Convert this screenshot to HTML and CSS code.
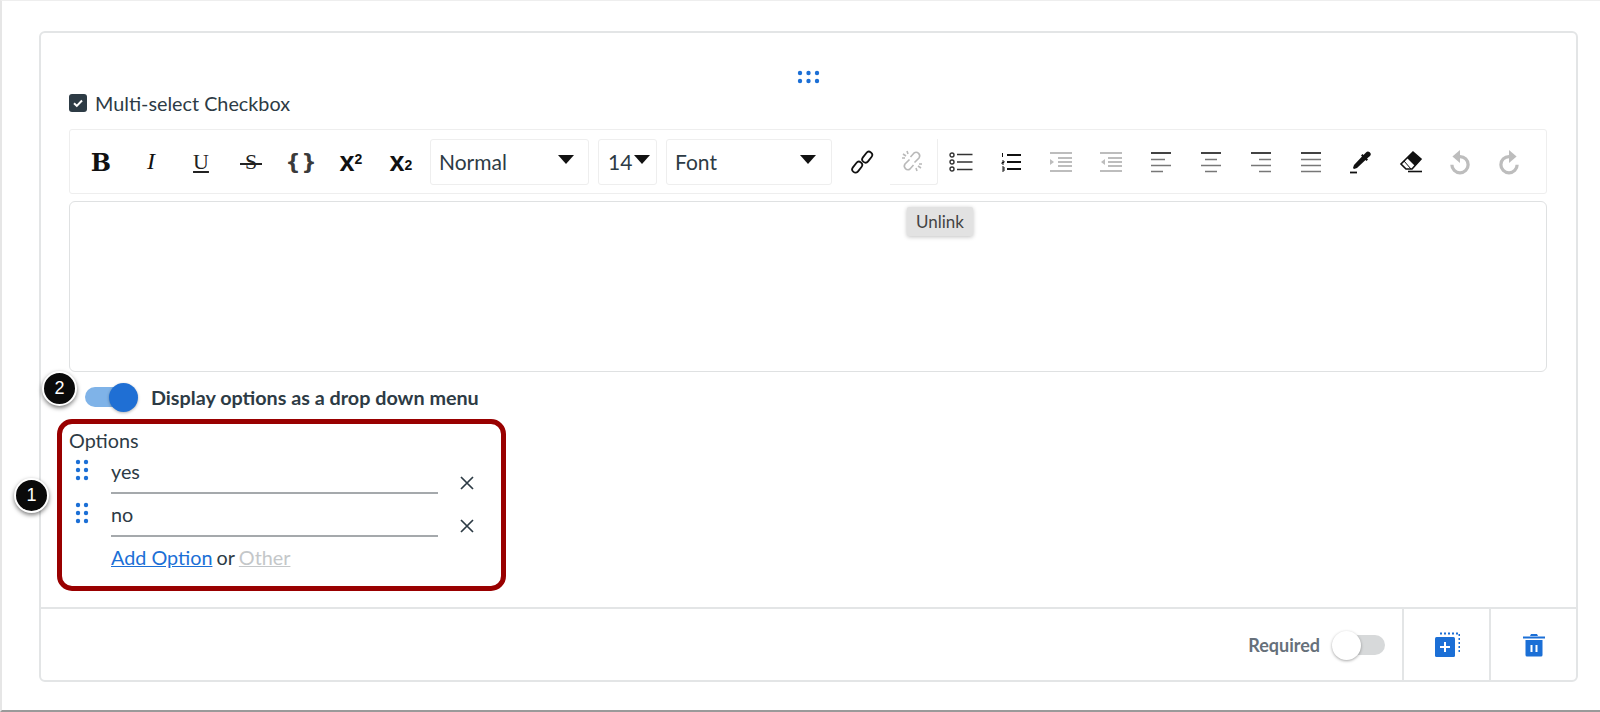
FILE: index.html
```html
<!DOCTYPE html>
<html lang="en">
<head>
<meta charset="utf-8">
<title>Multi-select Checkbox</title>
<link rel="stylesheet" href="styles.css">
</head>
<body>
<div class="screen">
  <section class="card">
    <div class="card-main">
      <svg class="handle-top" width="24" height="14" viewBox="0 0 24 14"><g fill="#1b6fd6"><circle cx="3" cy="3" r="2.2"/><circle cx="11.5" cy="3" r="2.2"/><circle cx="20" cy="3" r="2.2"/><circle cx="3" cy="11" r="2.2"/><circle cx="11.5" cy="11" r="2.2"/><circle cx="20" cy="11" r="2.2"/></g></svg>
      <div class="type-row">
        <svg class="check" width="18" height="18" viewBox="0 0 18 18"><rect width="18" height="18" rx="3" fill="#2d3b45"/><path d="M5 9.2l2.8 2.7L13 6.5" fill="none" stroke="#fff" stroke-width="2"/></svg>
        <span>Multi-select Checkbox</span>
      </div>
      <div class="toolbar">
        <span class="tb t-b">B</span>
        <span class="tb t-i">I</span>
        <span class="tb t-u">U</span>
        <span class="tb t-s"><span class="strike">S</span></span>
        <span class="tb t-c">{}</span>
        <span class="tb t-x">x<sup>2</sup></span>
        <span class="tb t-x">x<sub>2</sub></span>
        <div class="select sel-normal"><span>Normal</span><i class="caret"></i></div>
        <div class="select sel-size"><span>14</span><i class="caret"></i></div>
        <div class="select sel-font"><span>Font</span><i class="caret"></i></div>
        <span class="tb tb-link">
          <svg width="24" height="24" viewBox="0 0 24 24" fill="none" stroke="#111" stroke-width="1.8"><rect x="1" y="14" width="12" height="6.500" rx="3.200" transform="rotate(-52 7 17)"/><rect x="11" y="4" width="12" height="6.500" rx="3.200" transform="rotate(-52 17 7)"/></svg>
        </span>
        <span class="tb tb-unlink">
          <svg width="24" height="24" viewBox="0 0 24 24" fill="none" stroke="#b9b9b9" stroke-width="1.6"><path d="M9.500 10.500L5 15a3.600 3.600 0 0 0 5 5l3.500-4"/><path d="M14.500 13.500L19 9a3.600 3.600 0 0 0-5-5l-3.500 4"/><path d="M3 5l3 2M7 2l1 3M21 19l-3-2M17 22l-1-3M2 9h3M22 15h-3"/></svg>
        </span>
        <span class="tb">
          <svg width="24" height="20" viewBox="0 0 24 20" fill="none" stroke="#333"><circle cx="3" cy="3" r="2" stroke-width="1.4"/><circle cx="3" cy="10" r="2" stroke-width="1.4"/><circle cx="3" cy="17" r="2" stroke-width="1.4"/><path d="M8 2.500h15.500M8 10h15.500M8 17.500h15.500" stroke-width="1.500"/></svg>
        </span>
        <span class="tb">
          <svg width="20" height="20" viewBox="0 0 20 20" fill="none" stroke="#111" stroke-width="2"><path d="M6 3h14M6 10h14M6 17h14"/><path d="M1.500 1v4M1 9h2v1.500H1V12h2M1 15h2v4H1M1 17h2" stroke-width="1"/></svg>
        </span>
        <span class="tb">
          <svg width="24" height="22" viewBox="0 0 24 22" fill="none" stroke="#bdbdbd" stroke-width="1.800"><path d="M1 2h22M9 7h14M9 11h14M9 15h14M1 20h22"/><path d="M1 8l4 3-4 3z" fill="#bdbdbd" stroke="none"/></svg>
        </span>
        <span class="tb">
          <svg width="24" height="22" viewBox="0 0 24 22" fill="none" stroke="#bdbdbd" stroke-width="1.800"><path d="M1 2h22M9 7h14M9 11h14M9 15h14M1 20h22"/><path d="M6 8l-4 3 4 3z" fill="#bdbdbd" stroke="none"/></svg>
        </span>
        <span class="tb">
          <svg width="22" height="22" viewBox="0 0 22 22" fill="none" stroke-width="1.700"><path d="M1 2h20" stroke="#222"/><path d="M1 8.500h14M1 14.500h20M1 20.500h12" stroke="#777"/></svg>
        </span>
        <span class="tb">
          <svg width="22" height="22" viewBox="0 0 22 22" fill="none" stroke-width="1.700"><path d="M1 2h20" stroke="#222"/><path d="M5 8.500h12M1 14.500h20M5 20.500h12" stroke="#777"/></svg>
        </span>
        <span class="tb">
          <svg width="22" height="22" viewBox="0 0 22 22" fill="none" stroke-width="1.700"><path d="M1 2h20" stroke="#222"/><path d="M9 8.500h12M1 14.500h20M9 20.500h12" stroke="#777"/></svg>
        </span>
        <span class="tb">
          <svg width="22" height="22" viewBox="0 0 22 22" fill="none" stroke-width="1.700"><path d="M1 2h20" stroke="#222"/><path d="M1 8.500h20M1 14.500h20M1 20.500h20" stroke="#777"/></svg>
        </span>
        <span class="tb">
          <svg width="24" height="24" viewBox="0 0 24 24"><path d="M17 2.500a2.500 2.500 0 0 1 4 3.500l-3 2.500 1 1-1.500 1.500-1-1L8 18l-3 1-1-1 1-3 8-8.500-1-1L13.500 4l1 1z" fill="#111"/><path d="M1 22.500h7" stroke="#111" stroke-width="1.800"/></svg>
        </span>
        <span class="tb">
          <svg width="24" height="24" viewBox="0 0 24 24"><path d="M14 2l8 7-9 10H7l-5-5z" fill="#fff" stroke="#111" stroke-width="1.600"/><path d="M14 2l8 7-6 7-8-8z" fill="#111"/><path d="M5 11l7 8" stroke="#111" stroke-width="1"/><path d="M9 21.500h14" stroke="#111" stroke-width="1.600"/></svg>
        </span>
        <span class="tb tb-undo">
          <svg width="24" height="26" viewBox="0 0 22 24" fill="none"><path d="M8 7h3a7.500 7.500 0 1 1-7.500 7.500" stroke="#bdbdbd" stroke-width="3"/><path d="M11 1L4 7l7 6z" fill="#bdbdbd"/></svg>
        </span>
        <span class="tb tb-redo">
          <svg width="24" height="26" viewBox="0 0 22 24" fill="none"><path d="M14 7h-3a7.500 7.500 0 1 0 7.500 7.500" stroke="#bdbdbd" stroke-width="3"/><path d="M11 1l7 6-7 6z" fill="#bdbdbd"/></svg>
        </span>
      </div>
      <div class="tooltip">Unlink</div>
      <div class="editor"></div>
      <div class="display-row">
        <span class="badge badge-two">2</span>
        <span class="toggle toggle-on"><i class="knob"></i></span>
        <strong>Display options as a drop down menu</strong>
      </div>
      <div class="options">
        <span class="badge badge-one">1</span>
        <div class="options-title">Options</div>
        <div class="option">
          <svg class="grip" width="14" height="22" viewBox="0 0 14 22"><g fill="#1b6fd6"><circle cx="3" cy="3" r="2.200"/><circle cx="11" cy="3" r="2.200"/><circle cx="3" cy="11" r="2.200"/><circle cx="11" cy="11" r="2.200"/><circle cx="3" cy="19" r="2.200"/><circle cx="11" cy="19" r="2.200"/></g></svg>
          <div class="option-input">yes</div>
          <svg class="remove" width="14" height="14" viewBox="0 0 14 14"><path d="M1 1l12 12M13 1L1 13" stroke="#2d3b45" stroke-width="1.700" fill="none"/></svg>
        </div>
        <div class="option">
          <svg class="grip" width="14" height="22" viewBox="0 0 14 22"><g fill="#1b6fd6"><circle cx="3" cy="3" r="2.200"/><circle cx="11" cy="3" r="2.200"/><circle cx="3" cy="11" r="2.200"/><circle cx="11" cy="11" r="2.200"/><circle cx="3" cy="19" r="2.200"/><circle cx="11" cy="19" r="2.200"/></g></svg>
          <div class="option-input">no</div>
          <svg class="remove" width="14" height="14" viewBox="0 0 14 14"><path d="M1 1l12 12M13 1L1 13" stroke="#2d3b45" stroke-width="1.700" fill="none"/></svg>
        </div>
        <div class="add-row"><a class="add-link">Add Option</a><span class="or">or</span><a class="other-link">Other</a></div>
      </div>
    </div>
    <footer class="card-foot">
      <span class="req-label">Required</span>
      <span class="toggle toggle-off"><i class="knob"></i></span>
      <span class="foot-btn foot-first">
        <svg width="26" height="26" viewBox="0 0 26 26"><path d="M6 1.500h19.500V21" fill="none" stroke="#1b6fd6" stroke-width="2" stroke-dasharray="2 2"/><rect x="1" y="5" width="20" height="20" rx="1.500" fill="#1b6fd6"/><path d="M6 15h10M11 10v10" stroke="#fff" stroke-width="2"/></svg>
      </span>
      <span class="foot-btn">
        <svg width="24" height="24" viewBox="0 0 24 24"><path d="M8 3l1-2h6l1 2z" fill="#1b6fd6"/><path d="M1 4.500h22" stroke="#1b6fd6" stroke-width="2"/><path d="M3.500 7h17v15a1.500 1.500 0 0 1-1.500 1.500H5A1.500 1.500 0 0 1 3.500 22z" fill="#1b6fd6"/><path d="M9.500 12v7M14.500 12v7" stroke="#fff" stroke-width="2"/></svg>
      </span>
    </footer>
  </section>
</div>
</body>
</html>
```
FILE: styles.css
```css
* { box-sizing: border-box; }
html, body { margin: 0; padding: 0; background: #fff; }
body { font-family: Lato, "Open Sans", sans-serif; color: #2d3b45; }
.screen {
  width: 1600px;
  height: 712px;
  padding: 30px 22px 0 37px;
  border-left: 2px solid #e6e6e6;
  border-top: 1px solid #eeeeee;
  border-bottom: 2px solid #9a9a9a;
  overflow: hidden;
}
.card {
  width: 1539px;
  height: 651px;
  border: 2px solid #e3e5e6;
  border-radius: 6px;
  display: flex;
  flex-direction: column;
}
.card-main {
  height: 574px;
  padding: 0 28px;
  position: relative;
}
.handle-top { display: block; margin: 37px auto 0; }
.type-row {
  display: flex;
  align-items: center;
  gap: 8px;
  font-size: 19.8px;
  height: 24px;
  margin-top: 7px;
}
.toolbar {
  margin-top: 14px;
  height: 65px;
  width: 1478px;
  border: 1px solid #eeeeee;
  border-radius: 3px;
  padding: 0 0 0 6px;
  display: flex;
  align-items: center;
}
.tb {
  width: 50px;
  height: 46px;
  flex: none;
  display: flex;
  align-items: center;
  justify-content: center;
  color: #111;
}
.t-b { font: 700 24px "DejaVu Serif", serif; padding-top: 1px; }
.t-i { font: italic 400 24px "Liberation Serif", serif; }
.t-u { font: 400 22px "Liberation Serif", serif; text-decoration: underline; color: #222; }
.t-s { font: 400 22px "Liberation Serif", serif; color: #222; }
.strike { position: relative; }
.strike::after {
  content: "";
  position: absolute;
  left: -5px;
  right: -5px;
  top: 14px;
  height: 2px;
  background: #222;
}
.t-c { font: 700 21px "DejaVu Sans", sans-serif; color: #3a3a3a; letter-spacing: 1px; padding-left: 1px; }
.t-x { font: 700 27px "Liberation Sans", sans-serif; padding-top: 2px; }
.t-x sup { font-size: 14px; line-height: 0; position: relative; top: -4px; }
.t-x sub { font-size: 14px; line-height: 0; position: relative; top: 2px; }
.tb-undo { padding-right: 3px; }
.tb-redo { padding-right: 4px; }
.select {
  height: 46px;
  border: 1px solid #eeeeee;
  border-radius: 3px;
  flex: none;
  display: flex;
  align-items: center;
  justify-content: space-between;
  font-size: 21px;
}
.sel-normal { width: 159px; margin: 0 9px 0 4px; padding: 0 14px 0 8px; }
.sel-size { width: 59px; margin-right: 9px; padding: 0 6px 0 9px; }
.sel-font { width: 166px; padding: 0 15px 0 8px; }
.select span { color: #2d3b45; }
.caret {
  width: 0;
  height: 0;
  border-left: 8px solid transparent;
  border-right: 8px solid transparent;
  border-top: 9px solid #111;
  margin-bottom: 4px;
}
.tb-link { margin: 0 3px 0 5px; }
.tb-unlink {
  width: 48px;
  margin-right: -2px;
  padding-right: 4px;
  border-right: 1px solid #eeeeee;
  border-bottom: 1px solid #eeeeee;
  border-radius: 0 0 3px 0;
}
.tooltip {
  position: absolute;
  left: 866px;
  top: 174px;
  width: 66px;
  height: 29px;
  background: #e2e2e2;
  border-radius: 2px;
  box-shadow: 0 1px 4px rgba(0,0,0,.25);
  color: #444;
  font-size: 17px;
  display: flex;
  align-items: center;
  justify-content: center;
}
.editor {
  margin-top: 7px;
  width: 1478px;
  height: 171px;
  border: 1px solid #dfe1e2;
  border-radius: 6px;
}
.display-row {
  display: flex;
  align-items: center;
  margin-top: 11px;
  padding-left: 16px;
  height: 28px;
  position: relative;
}
.display-row strong { font-size: 19.75px; font-weight: 700; margin-left: 16px; }
.toggle { display: block; position: relative; flex: none; border-radius: 10px; }
.knob { position: absolute; border-radius: 50%; }
.toggle-on { width: 50px; height: 20px; background: #7fb3e8; }
.toggle-on .knob { width: 29px; height: 29px; left: 24px; top: -4px; background: #1f6fd4; box-shadow: 0 1px 3px rgba(0,0,0,.3); }
.badge {
  position: absolute;
  width: 35px;
  height: 35px;
  border-radius: 50%;
  background: #0a0a0a;
  border: 2px solid #fff;
  box-shadow: 0 2px 4px rgba(0,0,0,.5);
  color: #fff;
  font: 400 18px/31px "Liberation Sans", sans-serif;
  text-align: center;
}
.badge-two { left: -27px; top: -12px; }
.options {
  position: relative;
  margin: 8px 0 0 -12px;
  width: 449px;
  height: 172px;
  border: 5px solid #990000;
  border-radius: 15px;
  padding: 1px 7px 0 7px;
}
.badge-one { left: -48px; top: 54px; }
.options-title { font-size: 19.8px; line-height: 30px; }
.option {
  display: flex;
  align-items: flex-start;
  height: 43px;
}
.grip { flex: none; margin: 4px 0 0 6px; }
.option-input {
  width: 327px;
  height: 39px;
  margin-left: 22px;
  padding-top: 3px;
  border-bottom: 2px solid #a5a9ac;
  font-size: 19.8px;
  line-height: 26px;
}
.remove { flex: none; margin: 21px 0 0 22px; }
.add-row { font-size: 19.8px; padding: 4px 0 0 42px; line-height: 24px; }
.or { margin: 0 4px; }
.add-link { color: #1b6fd6; text-decoration: underline; }
.other-link { color: #c4c7c9; text-decoration: underline; }
.card-foot {
  flex: 1;
  border-top: 2px solid #e3e5e6;
  display: flex;
  align-items: center;
  justify-content: flex-end;
}
.req-label { font-size: 18px; font-weight: 700; color: #66707a; margin-right: 15px; }
.toggle-off { width: 50px; height: 20px; background: #d7d9da; margin-right: 17px; }
.toggle-off .knob { width: 29px; height: 29px; left: -3px; top: -4px; background: #fff; box-shadow: 0 1px 3px rgba(0,0,0,.35); }
.foot-btn {
  width: 87px;
  height: 100%;
  border-left: 2px solid #e3e5e6;
  display: flex;
  align-items: center;
  justify-content: center;
}
```
